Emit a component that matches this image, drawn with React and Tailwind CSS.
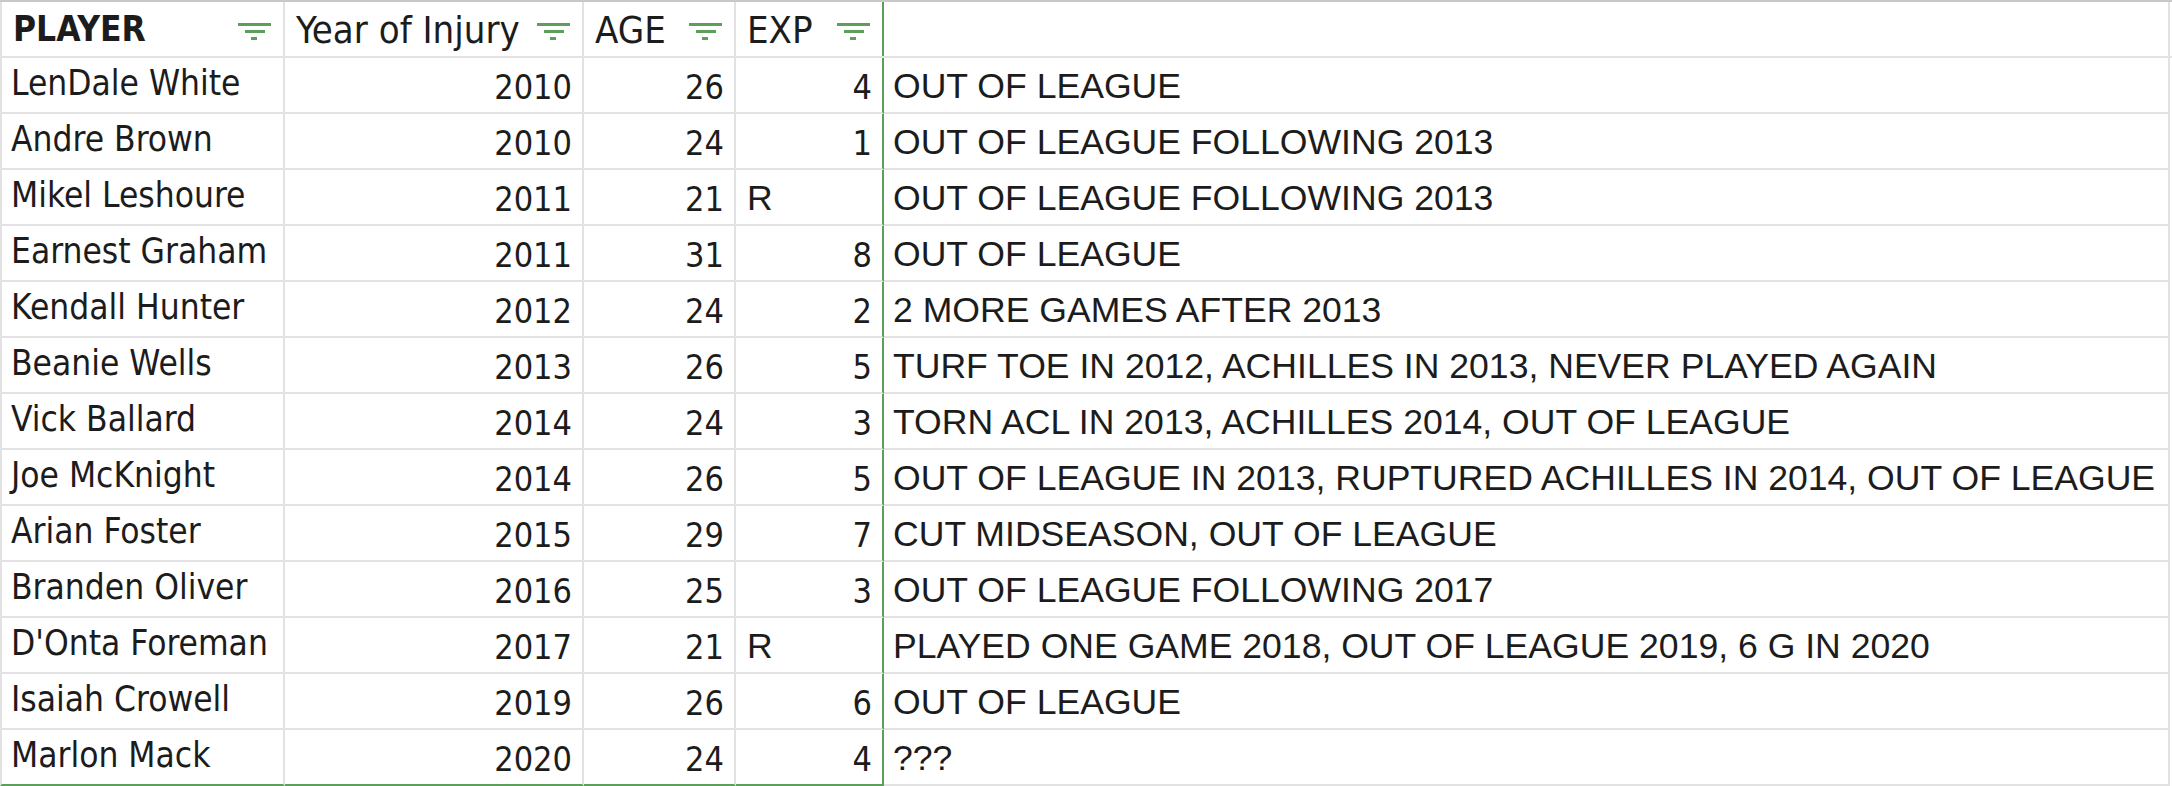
import React from 'react';

const rows = [
    ['LenDale White', 2010, 26, 4, 'OUT OF LEAGUE'],
    ['Andre Brown', 2010, 24, 1, 'OUT OF LEAGUE FOLLOWING 2013'],
    ['Mikel Leshoure', 2011, 21, 'R', 'OUT OF LEAGUE FOLLOWING 2013'],
    ['Earnest Graham', 2011, 31, 8, 'OUT OF LEAGUE'],
    ['Kendall Hunter', 2012, 24, 2, '2 MORE GAMES AFTER 2013'],
    ['Beanie Wells', 2013, 26, 5, 'TURF TOE IN 2012, ACHILLES IN 2013, NEVER PLAYED AGAIN'],
    ['Vick Ballard', 2014, 24, 3, 'TORN ACL IN 2013, ACHILLES 2014, OUT OF LEAGUE'],
    ['Joe McKnight', 2014, 26, 5, 'OUT OF LEAGUE IN 2013, RUPTURED ACHILLES IN 2014, OUT OF LEAGUE'],
    ['Arian Foster', 2015, 29, 7, 'CUT MIDSEASON, OUT OF LEAGUE'],
    ['Branden Oliver', 2016, 25, 3, 'OUT OF LEAGUE FOLLOWING 2017'],
    ["D'Onta Foreman", 2017, 21, 'R', 'PLAYED ONE GAME 2018, OUT OF LEAGUE 2019, 6 G IN 2020'],
    ['Isaiah Crowell', 2019, 26, 6, 'OUT OF LEAGUE'],
    ['Marlon Mack', 2020, 24, 4, '???'],
]

const FilterIcon = () => (
    <svg width="34" height="20" viewBox="0 0 34 20" className="shrink-0 mt-[4px]">
        <rect x="0" y="2" width="33" height="3" fill="#5b9f5b" />
        <rect x="7" y="9" width="20" height="3" fill="#5b9f5b" />
        <rect x="13" y="16" width="6" height="3" fill="#5b9f5b" />
    </svg>
)

const HeaderCell = ({label, bold, className}) => (
    <div className={`flex items-center justify-between pl-[11px] pr-[11px] ${className}`}>
        {bold ? (
            <span className="font-['DejaVu_Sans_Condensed','DejaVu_Sans',sans-serif] text-[35px] font-bold leading-none text-[#1c1c1c]">{label}</span>
        ) : (
            <span className="font-['DejaVu_Sans_Condensed','DejaVu_Sans',sans-serif] text-[38px] leading-none text-[#1c1c1c] pt-[2px]">{label}</span>
        )}
        <FilterIcon />
    </div>
)

const App = () => {
    const name = "font-['DejaVu_Sans_Condensed','DejaVu_Sans',sans-serif] text-[35px] leading-none text-[#1c1c1c]"
    const num = "font-['DejaVu_Sans_Condensed','DejaVu_Sans',sans-serif] text-[34px] leading-none text-[#1c1c1c]"
    const arial = "font-['Liberation_Sans',Arial,sans-serif] text-[35.6px] leading-none text-[#1c1c1c]"

    return (
        <div className="w-[2172px] h-[786px] bg-white border-t-2 border-[#c8c8c8] overflow-hidden">
            {/* header */}
            <div className="flex h-[56px] border-b-2 border-[#e2e2e2]">
                <HeaderCell label="PLAYER" bold className="w-[285px] border-l-2 border-r-2 border-[#e2e2e2]" />
                <HeaderCell label="Year of Injury" className="w-[299px] border-r-2 border-[#e2e2e2]" />
                <HeaderCell label="AGE" className="w-[152px] border-r-2 border-[#e2e2e2]" />
                <HeaderCell label="EXP" className="w-[148px] border-r-2 border-r-[#5b9f5b]" />
                <div className="w-[1286px] border-r-2 border-[#e2e2e2]"></div>
            </div>

            {rows.map((r, i) => {
                const last = i === rows.length - 1
                const bottom = last ? 'border-b-2 border-b-[#5b9f5b]' : 'border-b-2 border-b-[#e2e2e2]'
                return (
                    <div key={i} className="flex h-[56px]">
                        <div className={`w-[285px] flex items-center pl-[9px] pb-[4px] border-l-2 border-r-2 border-l-[#e2e2e2] border-r-[#e2e2e2] ${bottom}`}>
                            <span className={name}>{r[0]}</span>
                        </div>
                        <div className={`w-[299px] flex items-center justify-end pr-[10px] pt-[3px] border-r-2 border-r-[#e2e2e2] ${bottom}`}>
                            <span className={num}>{r[1]}</span>
                        </div>
                        <div className={`w-[152px] flex items-center justify-end pr-[10px] pt-[3px] border-r-2 border-r-[#e2e2e2] ${bottom}`}>
                            <span className={num}>{r[2]}</span>
                        </div>
                        {r[3] === 'R' ? (
                            <div className={`w-[148px] flex items-center pl-[11px] pt-[3px] border-r-2 border-r-[#5b9f5b] ${bottom}`}>
                                <span className={arial}>R</span>
                            </div>
                        ) : (
                            <div className={`w-[148px] flex items-center justify-end pr-[10px] pt-[3px] border-r-2 border-r-[#5b9f5b] ${bottom}`}>
                                <span className={num}>{r[3]}</span>
                            </div>
                        )}
                        <div className="w-[1286px] flex items-center pl-[9px] pt-[3px] border-r-2 border-b-2 border-[#e2e2e2] whitespace-nowrap">
                            <span className={arial}>{r[4]}</span>
                        </div>
                    </div>
                )
            })}
        </div>
    )
}

export default App
